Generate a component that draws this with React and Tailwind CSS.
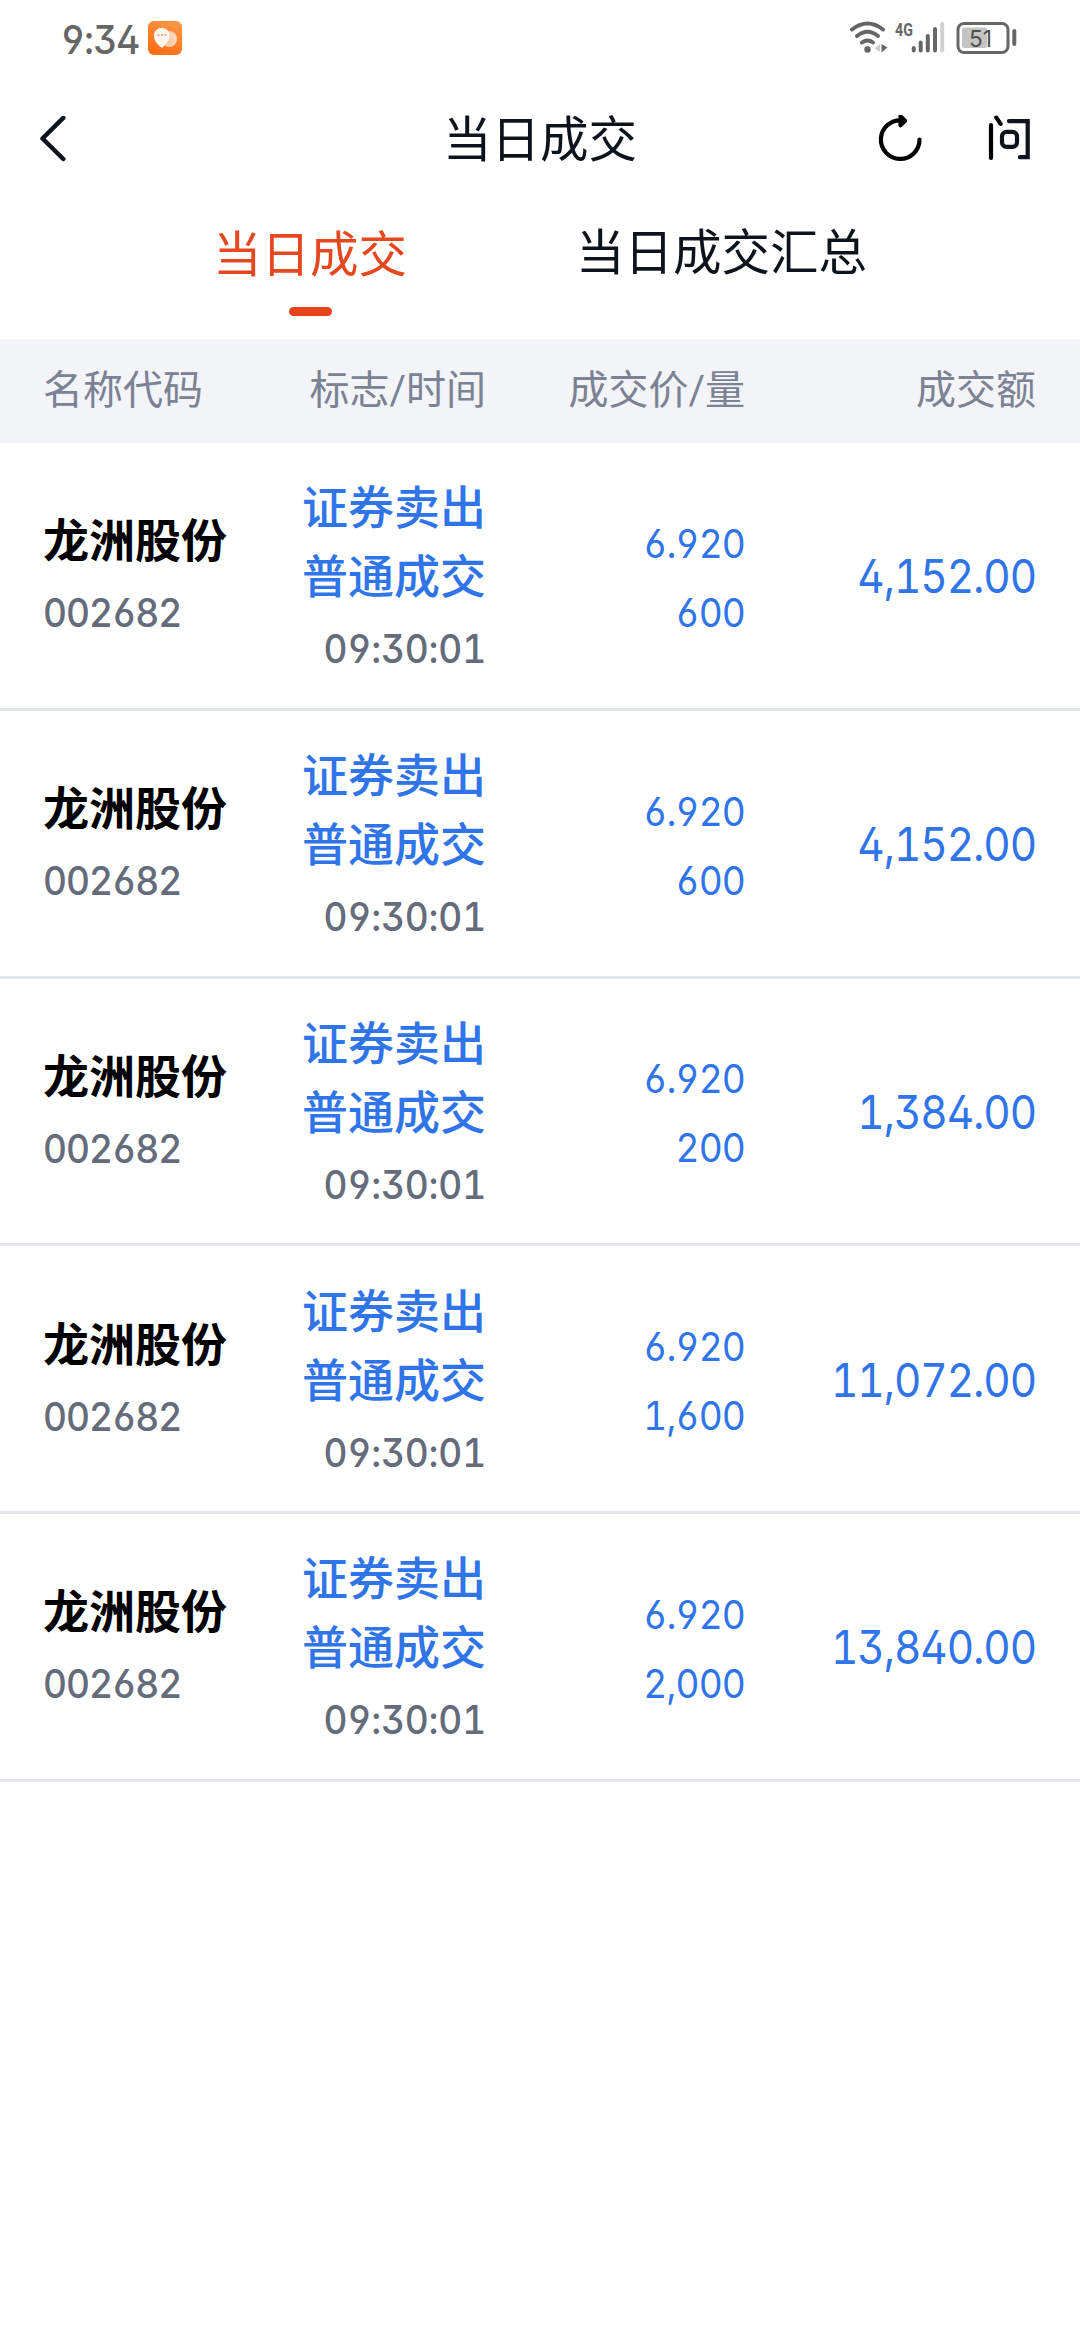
import React from 'react'

const trades = [
  { name: '龙洲股份', code: '002682', time: '09:30:01', price: '6.920', qty: '600', amount: '4,152.00' },
  { name: '龙洲股份', code: '002682', time: '09:30:01', price: '6.920', qty: '600', amount: '4,152.00' },
  { name: '龙洲股份', code: '002682', time: '09:30:01', price: '6.920', qty: '200', amount: '1,384.00' },
  { name: '龙洲股份', code: '002682', time: '09:30:01', price: '6.920', qty: '1,600', amount: '11,072.00' },
  { name: '龙洲股份', code: '002682', time: '09:30:01', price: '6.920', qty: '2,000', amount: '13,840.00' },
]

// open digits, fixed width
const num = "font-[Inter,sans-serif] [font-feature-settings:'ss01','tnum'] whitespace-nowrap"
const cols = 'grid grid-cols-[191px_252px_259px_291px] pl-[43px]'

function StatusBar() {
  return (
    <div className="h-[66px] pt-[21px] pl-[61px] pr-[62px] flex items-start justify-between text-[#666666]">
      <div className="flex items-start">
        <span className="w-[87px]">
          <span className={`${num} inline-block origin-left scale-x-[0.94] text-[39.5px] leading-[38px] font-medium tracking-[-1px]`}>9:34</span>
        </span>
        <svg width="34" height="34" viewBox="0 0 34 34">
          <defs>
            <linearGradient id="app" x1="1" y1="0" x2="0.5" y2="1">
              <stop offset="0" stopColor="#ff9a4a" />
              <stop offset="1" stopColor="#ff7019" />
            </linearGradient>
            <linearGradient id="bubble" x1="0" y1="0" x2="1" y2="0">
              <stop offset="0" stopColor="#ffb98c" />
              <stop offset="1" stopColor="#ffdcc4" />
            </linearGradient>
          </defs>
          <rect width="34" height="34" rx="6" fill="url(#app)" />
          <circle cx="21" cy="18" r="8" fill="url(#bubble)" />
          <path d="M14 27C9 22.500 6 20 6 14.500a7.800 7.800 0 0 1 15.600 0C21.600 20 18 22.500 14 27z" fill="#fff6f0" />
          <path d="M9.500 14h2M13 14h2M16.500 14h2" stroke="#f5966a" strokeWidth="1.500" />
        </svg>
      </div>
      <div className="flex items-start">
        <svg width="46" height="34" viewBox="0 0 46 34" fill="none" stroke="#666" strokeWidth="4" strokeLinecap="round">
          <path d="M3 8.500Q18.500 -3.500 34 8.500" />
          <path d="M8 15Q18.500 6.500 29 15" />
          <path d="M13 21.500Q18.500 17.500 24 21.500" />
          <circle cx="18.500" cy="28.500" r="3.200" fill="#666" stroke="none" />
          <path d="M31 23.500v7.500l-5.500-3.500z" fill="#ccc" stroke="none" />
          <path d="M32.500 23v8.500l6-5z" fill="#666" stroke="none" />
        </svg>
        <span className="w-[16px] text-[19px] leading-[17px] font-bold font-[Roboto] whitespace-nowrap">
          <span className="inline-block origin-left scale-x-75">4G</span>
        </span>
        <svg className="mr-[11px]" width="34" height="34" viewBox="0 0 34 34" stroke="#666" strokeWidth="4" strokeLinecap="round">
          <path d="M2.700 27v2.500M9.700 21.500v8M16.800 15v14.500M24 8v21.500" />
          <path d="M31.200 3v26.500" stroke="#d0d0d0" />
        </svg>
        <svg width="62" height="34" viewBox="0 0 62 34">
          <rect x="2" y="2.500" width="50" height="29" rx="6" fill="none" stroke="#666" strokeWidth="3" />
          <rect x="6" y="6.500" width="25" height="20.500" rx="2.500" fill="#c4c4c4" />
          <path d="M58.300 10v13" stroke="#666" strokeWidth="4" strokeLinecap="round" />
          <text x="13" y="25.500" fontSize="23" fontFamily="Inter" fill="#4f4f4f" textLength="23" lengthAdjust="spacingAndGlyphs">51</text>
        </svg>
      </div>
    </div>
  )
}

function NavBar() {
  return (
    <div className="h-[146px] pl-[39px] pr-[49px] grid grid-cols-[200px_1fr_200px] items-center">
      <svg width="28" height="46" viewBox="0 0 28 46" fill="none" stroke="#0d131c" strokeWidth="4.500" strokeLinecap="round" strokeLinejoin="round">
        <path d="M24.300 1.800L3.500 22.500L24.300 43" />
      </svg>
      <h1 className="pl-[10px] pt-[3px] text-[48.500px] leading-[60px] text-center">当日成交</h1>
      <div className="flex items-center justify-end gap-[65px]">
        <svg width="44" height="48" viewBox="0 0 44 48" fill="none" stroke="#000" strokeWidth="4.200" strokeLinecap="round" strokeLinejoin="round">
          <path d="M41.500 24.500A19.300 19.300 0 1 1 24 5.400" />
          <path d="M22.500 1.300L27 5.800L22.500 10.300z" fill="#000" />
        </svg>
        <svg width="44" height="48" viewBox="0 0 44 48" fill="none" stroke="#0d131c" strokeWidth="4.200" strokeLinecap="round">
          <path d="M4 10v33M9.300 2.600l4.300 6.300" stroke="#000" />
          <path d="M22 6.200h18.700v36H33" />
          <rect x="15" y="16.900" width="15" height="15" rx="4.500" />
        </svg>
      </div>
    </div>
  )
}

function Tabs() {
  return (
    <div className="h-[127px] pl-[213px] pr-[213px] pt-[12px] flex justify-between items-start text-[48.500px] leading-[60px]">
      <div className="flex flex-col items-center pt-[2px] text-[#e5481f]">
        <span>当日成交</span>
        <div className="mt-[21px] w-[43px] h-[9px] rounded-full bg-[#e8431c]" />
      </div>
      <span>当日成交汇总</span>
    </div>
  )
}

function TradeRow({ t }) {
  return (
    <div className={`${cols} h-[267.75px] items-center border-b-[3px] border-[#e3e7eb] text-right text-[#2f74e8]`}>
      <div className="pt-[3px] text-left">
        <p className="text-[46px] leading-[72px] font-bold text-black whitespace-nowrap">{t.name}</p>
        <p className={`${num} origin-left scale-x-[0.95] text-[39px] leading-[71px] font-medium tracking-[-1px] text-[#646b7a]`}>{t.code}</p>
      </div>
      <div className="pt-[8px]">
        <p className="text-[46px] leading-[70px] font-medium">证券卖出</p>
        <p className="text-[46px] leading-[69px] font-medium">普通成交</p>
        <p className={`${num} origin-right scale-x-[0.95] text-[39px] leading-[73px] font-medium tracking-[-0.2px] text-[#646b7a]`}>{t.time}</p>
      </div>
      <div className="pt-[5px]">
        <p className={`${num} origin-right scale-x-[0.95] text-[39px] leading-[69px] tracking-[-0.9px]`}>{t.price}</p>
        <p className={`${num} origin-right scale-x-[0.95] text-[39px] leading-[69px] tracking-[-0.9px]`}>{t.qty}</p>
      </div>
      <p className={`${num} pt-[2px] origin-right scale-x-[0.9] text-[47px] leading-[60px] tracking-[-1.2px]`}>{t.amount}</p>
    </div>
  )
}

export default function App() {
  return (
    <div className="w-[1080px] min-h-[2340px] bg-white text-[#0d131c] font-[Roboto,'Noto_Sans_CJK_SC',sans-serif]">
      <StatusBar />
      <NavBar />
      <Tabs />

      <div className={`${cols} h-[104px] items-center pb-[1px] bg-[#f2f4f8] text-[40px] text-[#7a8294] text-right`}>
        <span className="text-left">名称代码</span>
        <span>标志/时间</span>
        <span>成交价/量</span>
        <span>成交额</span>
      </div>

      {trades.map((t, i) => <TradeRow key={i} t={t} />)}
    </div>
  )
}
